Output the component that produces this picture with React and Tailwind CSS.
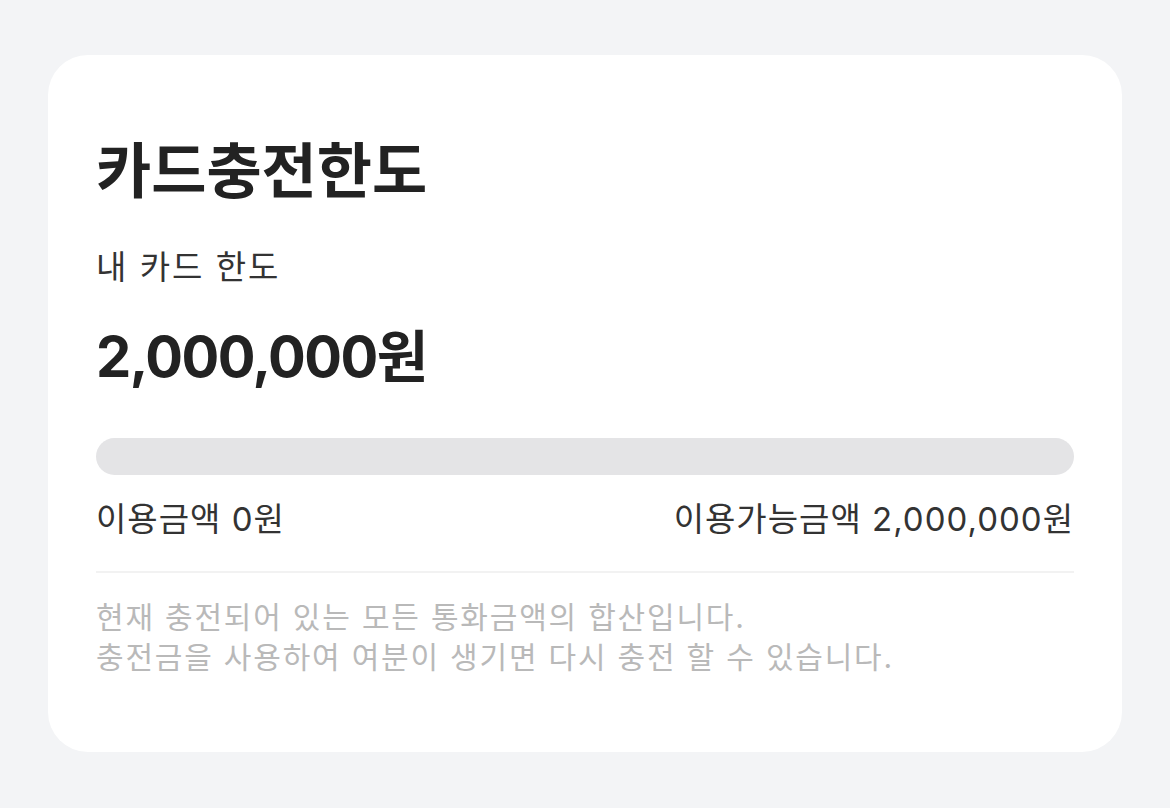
import React from 'react';

const font = { fontFamily: 'Inter, "Noto Sans CJK KR", "Noto Sans", sans-serif' };

const CardLimit = ({ limit = 2000000, used = 0 }) => {
  const fmt = (n) => n.toLocaleString('ko-KR');
  const pct = limit ? Math.min(100, (used / limit) * 100) : 0;

  return (
    <div className="min-h-[808px] w-full bg-[#f3f4f6] pt-[55px] px-[48px]" style={font}>
      <section className="w-[1074px] rounded-[40px] bg-white px-[48px] pt-[76px] pb-[75px]">
        <h1 className="text-[60px] font-bold leading-[80px] text-[#222222]">카드충전한도</h1>

        <p className="mt-[32px] text-[33px] leading-[48px] tracking-[2px] text-[#333333]">
          내 카드 한도
        </p>
        <p className="mt-[30px] text-[56px] font-bold leading-[72px] tracking-[-1.5px] text-[#222222]">
          {fmt(limit)}원
        </p>

        <div className="mt-[45px] h-[37px] w-full overflow-hidden rounded-full bg-[#e4e4e6]">
          <div className="h-full rounded-full bg-[#3b82f6]" style={{ width: `${pct}%` }} />
        </div>

        <div className="mt-[20px] flex items-center justify-between text-[33px] leading-[48px] tracking-[1px] text-[#333333]">
          <span>이용금액 {fmt(used)}원</span>
          <span>이용가능금액 {fmt(limit - used)}원</span>
        </div>

        <div className="mt-[28px] h-[2px] w-full bg-[#f2f2f2]" />

        <div className="mt-[24px] text-[30px] leading-[40px] tracking-[1.8px] text-[#b9b9b9]">
          <p>현재 충전되어 있는 모든 통화금액의 합산입니다.</p>
          <p>충전금을 사용하여 여분이 생기면 다시 충전 할 수 있습니다.</p>
        </div>
      </section>
    </div>
  );
};

export default function App() {
  return <CardLimit />;
}
